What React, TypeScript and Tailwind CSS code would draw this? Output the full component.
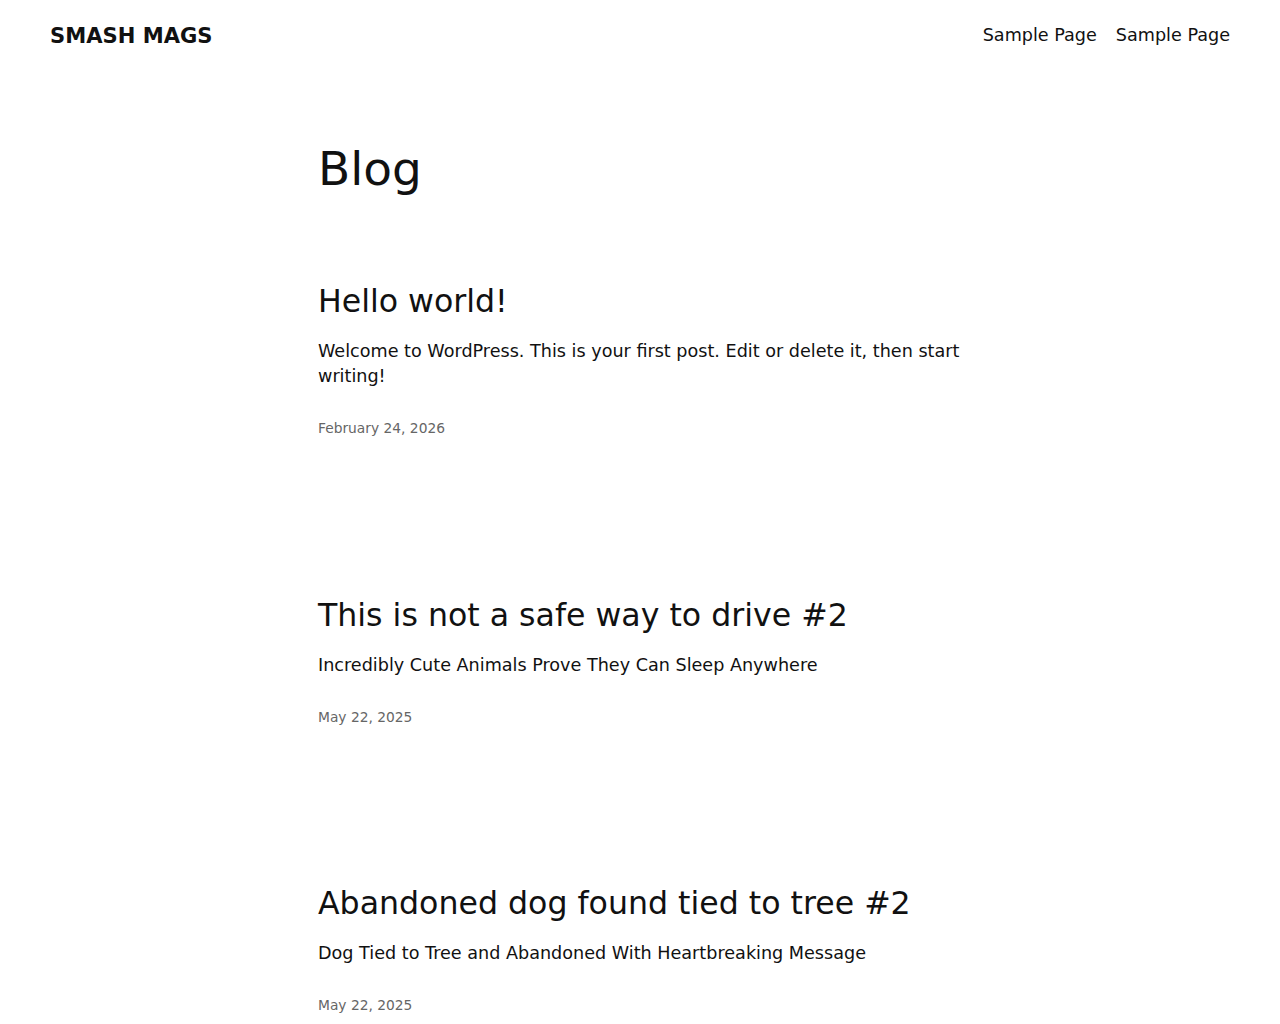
export default function App() {
  const posts = [
    {
      title: "Hello world!",
      excerpt: "Welcome to WordPress. This is your first post. Edit or delete it, then start writing!",
      date: "February 24, 2026",
    },
    {
      title: "This is not a safe way to drive #2",
      excerpt: "Incredibly Cute Animals Prove They Can Sleep Anywhere",
      date: "May 22, 2025",
    },
    {
      title: "Abandoned dog found tied to tree #2",
      excerpt: "Dog Tied to Tree and Abandoned With Heartbreaking Message",
      date: "May 22, 2025",
    },
  ];
  return (
    <div className="min-h-screen bg-white text-[#111111]" style={{ fontFamily: '"DejaVu Sans", sans-serif' }}>
      <header className="flex h-[71px] items-center justify-between px-[50px]">
        <div className="text-[21.1px] font-bold leading-none">SMASH MAGS</div>
        <nav className="flex gap-[19px] text-[17.6px] leading-none">
          <a>Sample Page</a>
          <a>Sample Page</a>
        </nav>
      </header>
      <main className="mx-auto w-[644px]">
        <h1 className="mt-[70px] text-[47px] leading-[1.2]">Blog</h1>
        <div className="mt-[86px] flex flex-col gap-[160px]">
          {posts.map((p, i) => (
            <article key={i}>
              <h2 className="text-[31.6px] leading-[1.2]">{p.title}</h2>
              <p className="mt-[18px] text-[17.6px] leading-[25px]">{p.excerpt}</p>
              <div className="mt-[31px] text-[13.8px] leading-[1.2] text-[#666666]">{p.date}</div>
            </article>
          ))}
        </div>
      </main>
    </div>
  );
}
